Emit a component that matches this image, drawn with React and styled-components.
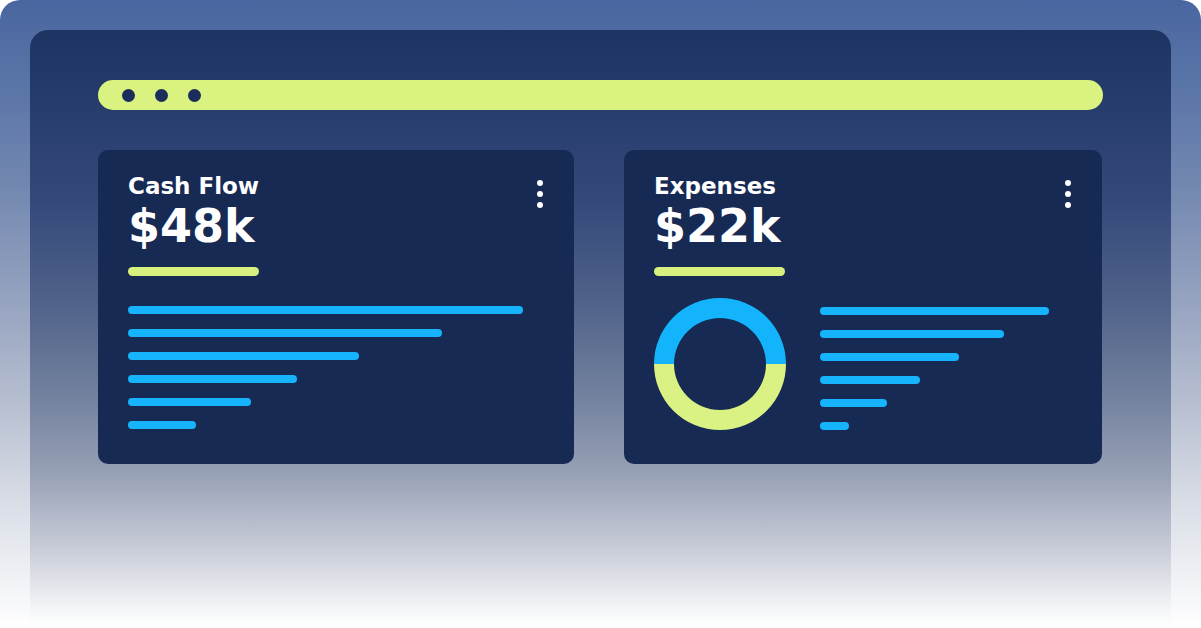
import React from "react";
import styled, { createGlobalStyle } from "styled-components";

const GlobalStyle = createGlobalStyle`
  html, body {
    margin: 0;
    padding: 0;
    background: #ffffff;
  }
  body {
    font-family: "DejaVu Sans", "Liberation Sans", sans-serif;
  }
`;

const cashBars = [395, 314, 231, 169, 123, 68];
const expenseBars = [229, 184, 139, 100, 67, 29];

export default function App() {
  return (
    <>
      <GlobalStyle />
      <Frame>
        <Window>
          <AddressBar>
            <Dot />
            <Dot />
            <Dot />
          </AddressBar>
          <Cards>
            <Card>
              <CardHeader>
                <div>
                  <Title>Cash Flow</Title>
                  <Amount>$48k</Amount>
                </div>
                <Kebab>
                  <span />
                  <span />
                  <span />
                </Kebab>
              </CardHeader>
              <Accent />
              <BarList $top={30}>
                {cashBars.map((w) => (
                  <Bar key={w} style={{ width: w }} />
                ))}
              </BarList>
            </Card>
            <Card>
              <CardHeader>
                <div>
                  <Title>Expenses</Title>
                  <Amount>$22k</Amount>
                </div>
                <Kebab>
                  <span />
                  <span />
                  <span />
                </Kebab>
              </CardHeader>
              <Accent />
              <ChartRow>
                <Donut width="132" height="132" viewBox="0 0 132 132">
                  <path d="M 0 66 A 66 66 0 0 1 132 66 L 112 66 A 46 46 0 0 0 20 66 Z" fill="#14b4fd" />
                  <path d="M 0 66 A 66 66 0 0 0 132 66 L 112 66 A 46 46 0 0 1 20 66 Z" fill="#daf283" />
                </Donut>
                <BarList $top={8}>
                  {expenseBars.map((w) => (
                    <Bar key={w} style={{ width: w }} />
                  ))}
                </BarList>
              </ChartRow>
            </Card>
          </Cards>
        </Window>
      </Frame>
    </>
  );
}

const Frame = styled.div`
  width: 1201px;
  height: 628px;
  box-sizing: border-box;
  padding: 30px 30px 0;
  border-radius: 20px 20px 0 0;
  overflow: hidden;
  background: linear-gradient(
    180deg,
    #4a66a0 0%,
    #5c77a8 16%,
    #778bb2 32%,
    #96a3c0 48%,
    #b6bed0 64%,
    #d9dde6 80%,
    #f7f8fa 96%,
    #ffffff 100%
  );
`;

const Window = styled.div`
  height: 598px;
  box-sizing: border-box;
  padding: 50px 68px 0;
  border-radius: 18px 18px 0 0;
  background: linear-gradient(
    180deg,
    #1d3463 0%,
    #263c6b 12%,
    #34497a 28%,
    #4e6189 45%,
    #75839f 62%,
    #96a0b5 74%,
    #c9cdd8 87%,
    #f5f6f8 97%,
    #ffffff 100%
  );
`;

const AddressBar = styled.div`
  height: 30px;
  border-radius: 15px;
  background: #d9f280;
  display: flex;
  align-items: center;
  gap: 20px;
  padding-left: 24px;
`;

const Dot = styled.span`
  width: 13px;
  height: 13px;
  border-radius: 50%;
  background: #1b2d5a;
`;

const Cards = styled.div`
  margin-top: 40px;
  display: grid;
  grid-template-columns: 476px 478px;
  gap: 50px;
`;

const Card = styled.div`
  background: #172a54;
  border-radius: 10px;
  padding: 25px 30px 34px;
  display: flex;
  flex-direction: column;
`;

const CardHeader = styled.div`
  display: flex;
  justify-content: space-between;
  align-items: flex-start;
`;

const Title = styled.div`
  color: #ffffff;
  font-size: 23px;
  font-weight: 700;
  line-height: 1;
`;

const Amount = styled.div`
  margin-top: 5px;
  color: #ffffff;
  font-size: 46px;
  font-weight: 700;
  line-height: 1;
`;

const Kebab = styled.div`
  margin-top: 5px;
  margin-right: 1px;
  display: flex;
  flex-direction: column;
  gap: 5px;
  & > span {
    width: 6px;
    height: 6px;
    border-radius: 50%;
    background: #ffffff;
  }
`;

const Accent = styled.div`
  margin-top: 18px;
  width: 131px;
  height: 9px;
  border-radius: 5px;
  background: #d7f17f;
`;

const ChartRow = styled.div`
  margin-top: 22px;
  display: flex;
  align-items: center;
  gap: 34px;
`;

const Donut = styled.svg`
  display: block;
  flex: none;
`;

const BarList = styled.div`
  margin-top: ${(p) => p.$top}px;
  display: flex;
  flex-direction: column;
  gap: 15px;
`;

const Bar = styled.div`
  height: 8px;
  border-radius: 4px;
  background: #16b4fc;
`;
